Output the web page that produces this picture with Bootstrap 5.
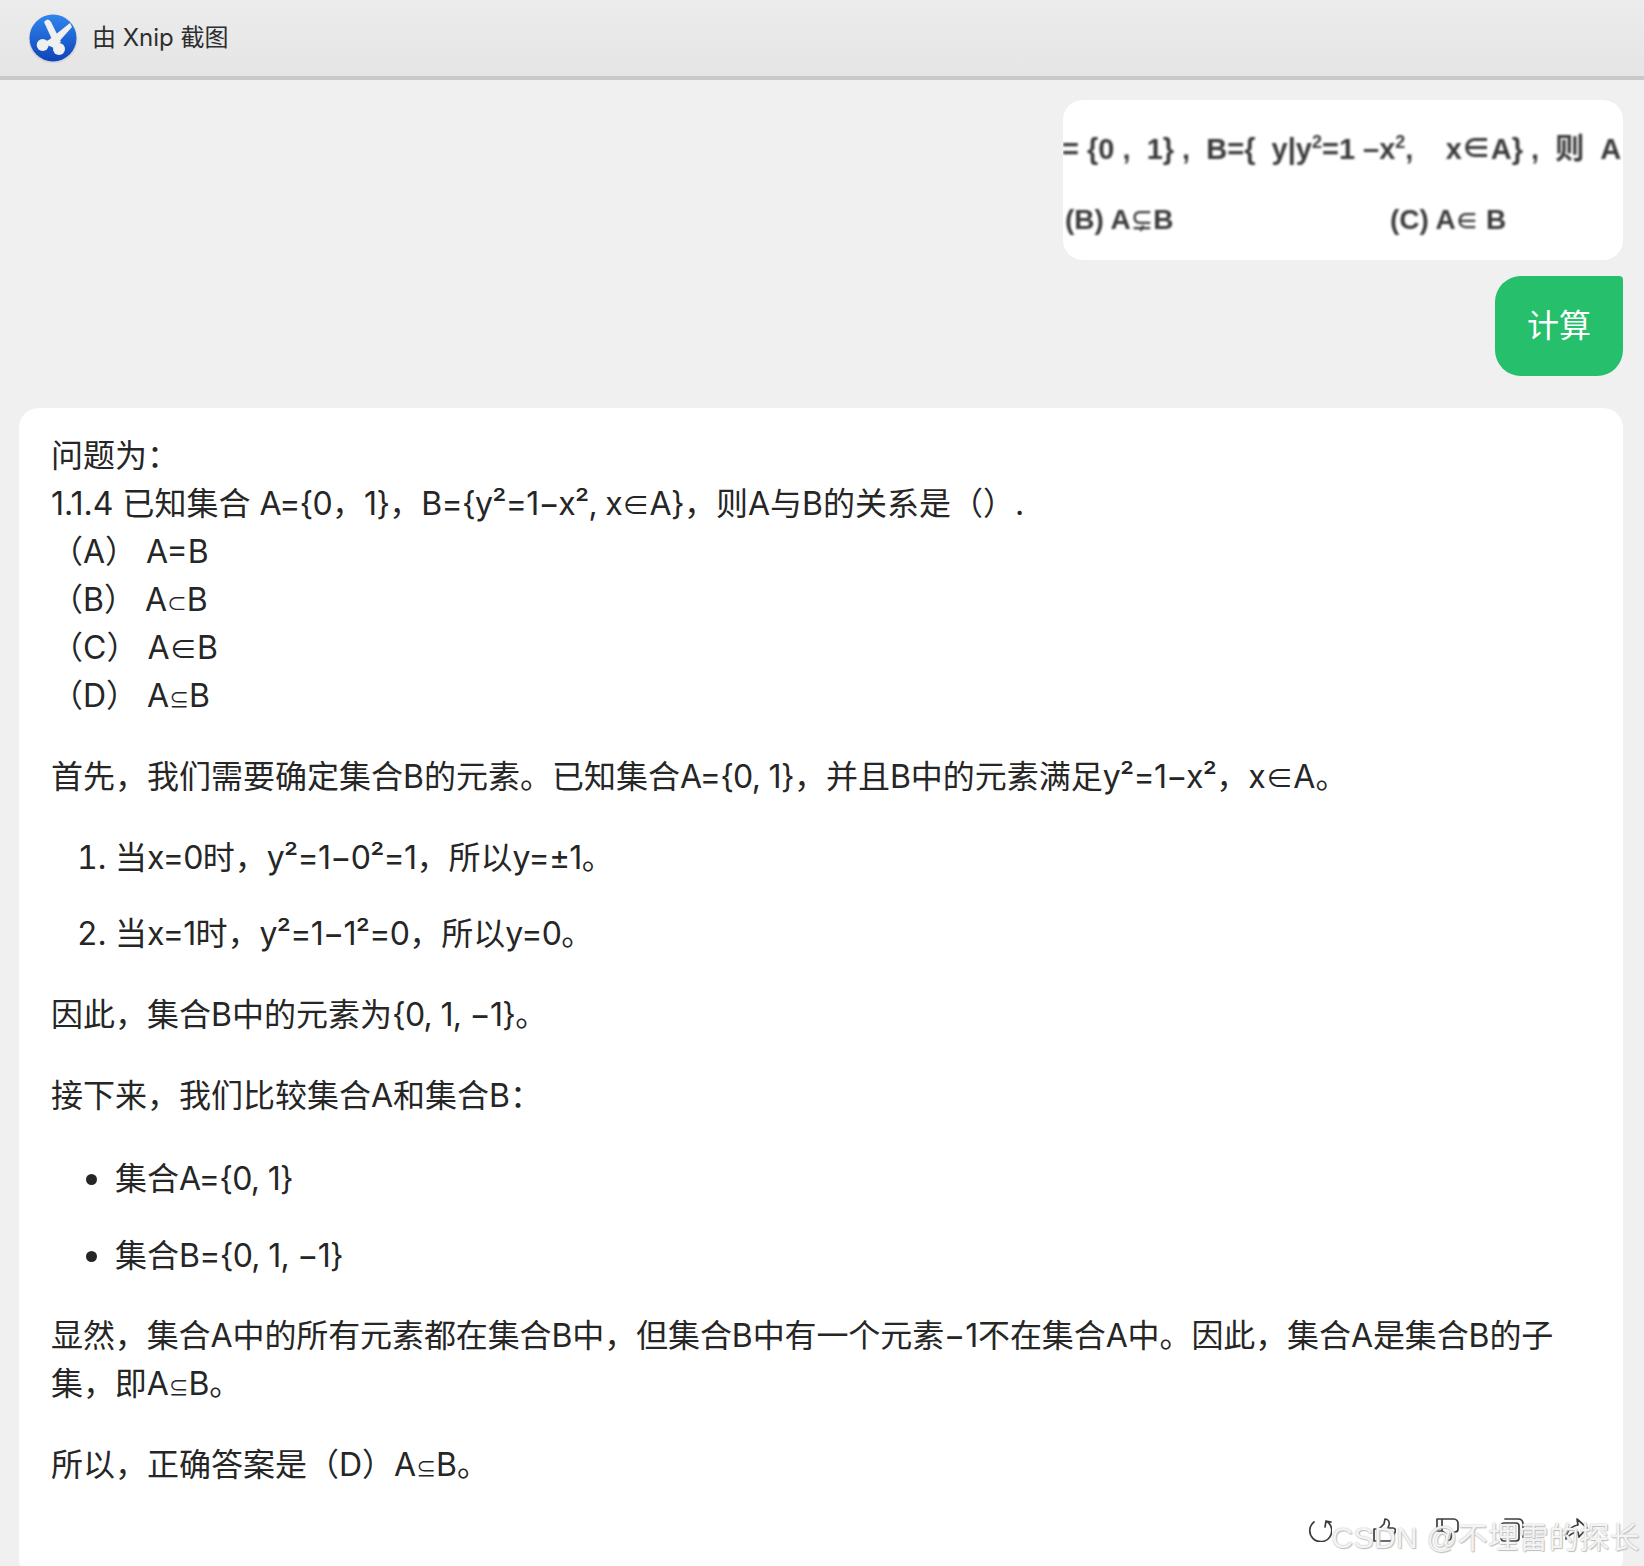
<!DOCTYPE html>
<html lang="zh">
<head>
<meta charset="utf-8">
<title>Xnip</title>
<link href="https://cdn.jsdelivr.net/npm/bootstrap@5.3.0/dist/css/bootstrap.min.css" rel="stylesheet">
<style>
html,body{height:1566px;overflow:hidden}
body{background:#f0f0f0;font-family:Inter,"Noto Sans CJK SC",sans-serif;color:#262626;position:relative}
.xn-top{height:80px;background:linear-gradient(#ececec,#e5e5e5);border-bottom:4px solid #c9c9c9;padding-left:28px;gap:14px;font-size:24px;color:#2e2e2e}
.xn-logo{width:50px;height:50px;flex:none}
.xn-thread{padding:20px 21px 0 19px;gap:16px}
.xn-shot{width:560px;height:160px;background:#fff;border-radius:20px;overflow:hidden;font-family:"Liberation Sans","Noto Sans CJK SC",sans-serif;font-weight:700;font-size:29px;color:#3a3a3a;padding-top:28px}
.xn-shot-line{white-space:pre;line-height:42px;filter:blur(.8px);height:42px}
.xn-shot-line sup{font-size:18px;top:-.6em;line-height:0}
.xn-l1{margin-left:-1px}
.xn-l2{margin-top:29px;padding-left:2px;font-size:28px}
.xn-l2 span{display:inline-block;width:325px}
.xn-l2 i{font-style:normal;font-size:.8em;line-height:0}
.xn-send{width:128px;height:100px;background:#26bf6b;color:#fff;font-size:32px;border-radius:26px 4px 26px 26px}
.xn-ans{background:#fff;border-radius:20px;padding:24px 32px 0;height:1170px;font-size:32px;line-height:48px;margin-top:16px}
.xn-ans p{margin:0 0 33px}
.xn-ans ol,.xn-ans ul{padding-left:64px}
.xn-ans ol{margin:0 0 33px}
.xn-ans ol li{margin-bottom:28px}
.xn-ans ul{margin:0 0 32px}
.xn-ans ul li{margin-bottom:27px}
.xn-ans li:last-child{margin-bottom:0}
.xn-ans ul li::marker{font-size:1.1em}
.xn-sub{font-size:.62em;line-height:0}
.xn-in{font-size:.86em;line-height:0}
.xn-la{letter-spacing:-.7px}
.xn-ans .xn-long{letter-spacing:-.1px}
.xn-tools{gap:40px;margin-top:29px;padding-right:3px}
.xn-tools svg{width:24px;height:24px;fill:none;stroke:#3c3c3c;stroke-width:1.7;stroke-linecap:round;stroke-linejoin:round}
.xn-mark{position:absolute;right:4px;top:1518px;font-family:"Liberation Sans","Noto Sans CJK SC",sans-serif;font-size:30px;letter-spacing:.4px;line-height:40px;color:#f4f4f4;white-space:nowrap;text-shadow:0 0 1.5px #aaa,1px 1px 1px #c4c4c4}
</style>
</head>
<body>
<header class="xn-top d-flex align-items-center">
<svg class="xn-logo" viewBox="0 0 50 50"><defs><linearGradient id="g" x1="0" y1="0" x2="0" y2="1"><stop offset="0" stop-color="#2f86ee"/><stop offset="1" stop-color="#0f43b8"/></linearGradient></defs><circle cx="25" cy="26" r="24.500" fill="#d6d6d6"/><circle cx="25" cy="25" r="23.500" fill="url(#g)"/><path d="M16 9Q20 4 23 9L33 29L27 33ZM42 10L44 14L28 32L22 26Z" fill="#f0f0f0"/><circle cx="14.700" cy="32" r="6" fill="#f0f0f0"/><circle cx="31" cy="36" r="6" fill="#f0f0f0"/><path d="M15 30L26 24L33 36L28 36Z" fill="#f0f0f0"/></svg>
<span>由 Xnip 截图</span>
</header>
<main class="xn-thread d-flex flex-column">
<div class="xn-shot align-self-end">
<div class="xn-shot-line xn-l1">= {0 ,  1} ,  B={  y|y<sup>2</sup>=1 –x<sup>2</sup>,    x∈A} ,  则  A</div>
<div class="xn-shot-line xn-l2"><span>(B) A<i>⊊</i>B</span>(C) A<i>∈</i> B</div>
</div>
<div class="xn-send align-self-end d-flex align-items-center justify-content-center">计算</div>
<article class="xn-ans">
<div>问题为：</div>
<div>1.1.4 已知集合 <span class="xn-la">A={0</span>，<span class="xn-la">1}</span>，<span class="xn-la">B={y²=1−x², x</span><span class="xn-in">∈</span><span class="xn-la">A}</span>，则A与B的关系是（）.</div>
<div>（A） A=B</div>
<div>（B） A<span class="xn-sub">⊂</span>B</div>
<div>（C） A<span class="xn-in">∈</span>B</div>
<p>（D） A<span class="xn-sub">⊆</span>B</p>
<p>首先，我们需要确定集合B的元素。已知集合<span class="xn-la">A={0, 1}</span>，并且B中的元素满足<span class="xn-la">y²=1−x²</span>，x<span class="xn-in">∈</span>A。</p>
<ol>
<li>当<span class="xn-la">x=0</span>时，<span class="xn-la">y²=1−0²=1</span>，所以<span class="xn-la">y=±1</span>。</li>
<li>当<span class="xn-la">x=1</span>时，<span class="xn-la">y²=1−1²=0</span>，所以<span class="xn-la">y=0</span>。</li>
</ol>
<p>因此，集合B中的元素为<span class="xn-la">{0, 1, −1}</span>。</p>
<p>接下来，我们比较集合A和集合B：</p>
<ul>
<li>集合<span class="xn-la">A={0, 1}</span></li>
<li>集合<span class="xn-la">B={0, 1, −1}</span></li>
</ul>
<p class="xn-long">显然，集合A中的所有元素都在集合B中，但集合B中有一个元素−1不在集合A中。因此，集合A是集合B的子集，即A<span class="xn-sub">⊆</span>B。</p>
<p class="mb-0">所以，正确答案是（D）A<span class="xn-sub">⊆</span>B。</p>
<div class="xn-tools d-flex justify-content-end">
<svg viewBox="0 0 24 24"><path d="M6 4A11 11 0 1 0 18 3M18 3l-1 6M18 3l5 1"/></svg>
<svg viewBox="0 0 24 24"><path d="M2 11h5v12H2zM7 11l5-5 1-5c3 0 5 3 4 6l-1 3h5c2 0 3 2 2 4l-2 6c-.5 2-1.500 3-3 3H2"/></svg>
<svg viewBox="0 0 24 24"><path d="M1 1h5v12H1zM1 1h17c2 0 4 2 4 4v6c0 2-1 3-3 3h-3l-1 6c-.5 2-2 3-4 2l-1-6-4-3"/></svg>
<svg viewBox="0 0 24 24"><rect x="1" y="5" width="18" height="18" rx="3"/><path d="M5 1h13c3 0 5 2 5 5v13"/></svg>
<svg viewBox="0 0 24 24"><path d="M13 1l10 9-8 9-1-5c-5 0-8 2-12 7 0-7 5-13 12-14z"/></svg>
</div>
</article>
</main>
<div class="xn-mark">CSDN @不埋雷的探长</div>
<script src="https://cdn.jsdelivr.net/npm/bootstrap@5.3.0/dist/js/bootstrap.bundle.min.js"></script>
</body>
</html>
